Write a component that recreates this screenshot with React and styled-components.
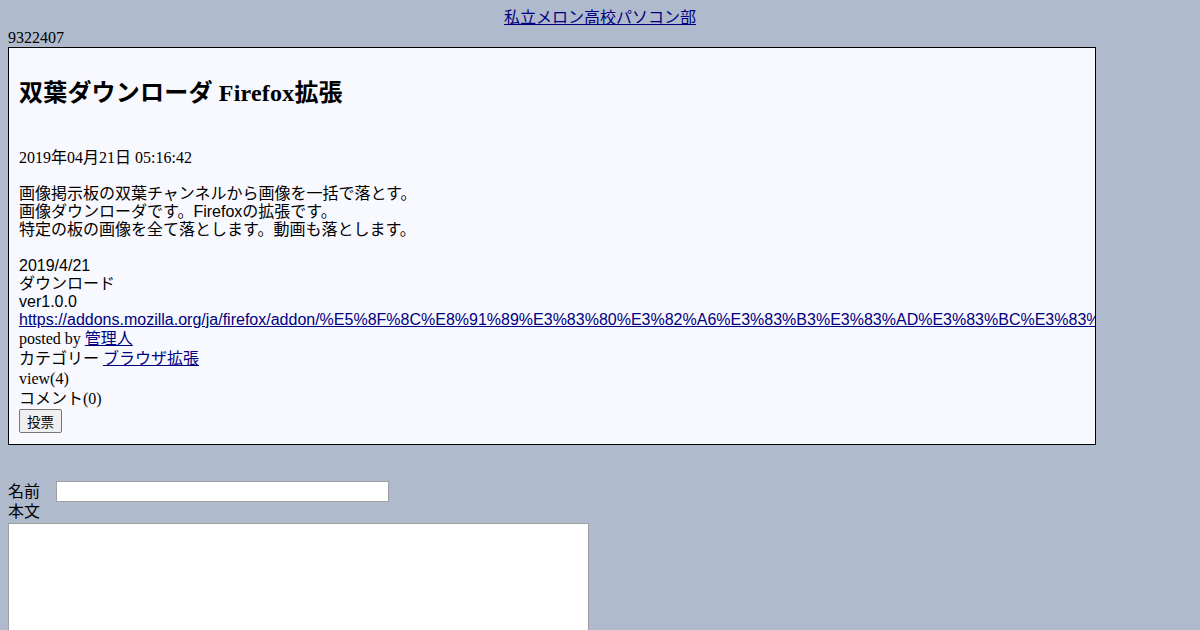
import React from "react";
import styled, { createGlobalStyle } from "styled-components";

const GlobalStyle = createGlobalStyle`
body{
    margin: 8px;
    background: #afbbcd;
    color: #000;
    font-family: 'Liberation Serif', 'Noto Sans CJK JP', serif;
    font-size: 16px;
}
`

const SiteTitle = styled.div`
text-align: center;
line-height: 20px;
`

const NavLink = styled.a`
color: #000080;
text-decoration: underline;
`

const Counter = styled.div`
line-height: 19px;
`

const Article = styled.div`
width: 1066px;
padding: 10px 10px 11px;
border: 1px solid #000;
background: #f8f8ff;
overflow: hidden;
`

const Heading = styled.h2`
margin: 20px 0;
font-size: 24px;
line-height: 30px;
font-weight: bold;
letter-spacing: 0.2px;
`

const PostDate = styled.div`
margin: 40px 0 17px;
line-height: 20px;
`

const Body = styled.div`
font-family: 'Liberation Sans', 'Noto Sans CJK JP', sans-serif;
line-height: 18px;
white-space: nowrap;
`

const MetaLine = styled.div`
line-height: 20px;
`

const VoteButton = styled.button`
height: 24px;
padding: 1px 7px;
font-family: 'Noto Sans CJK JP', sans-serif;
font-size: 13.5px;
background: #efefef;
border: 1px solid #767676;
border-radius: 2px;
color: #000;
`

const CommentForm = styled.form`
margin-top: 36px;
`

const NameRow = styled.div`
display: flex;
align-items: center;
height: 21px;
`

const Label = styled.label`
display: inline-block;
width: 48px;
line-height: 20px;
`

const NameInput = styled.input`
box-sizing: border-box;
width: 333px;
height: 21px;
border: 1px solid #a0a0a0;
background: #fff;
padding: 1px 2px;
`

const BodyLabel = styled.div`
line-height: 20px;
`

const BodyArea = styled.textarea`
display: block;
box-sizing: border-box;
margin-top: 1px;
width: 581px;
height: 160px;
border: 1px solid #a0a0a0;
background: #fff;
resize: none;
`

const url = "https://addons.mozilla.org/ja/firefox/addon/%E5%8F%8C%E8%91%89%E3%83%80%E3%82%A6%E3%83%B3%E3%83%AD%E3%83%BC%E3%83%80/";

const App = () => {
    return (
        <>
            <GlobalStyle />
            <SiteTitle><NavLink href="#">私立メロン高校パソコン部</NavLink></SiteTitle>
            <Counter>9322407</Counter>
            <Article>
                <Heading>双葉ダウンローダ Firefox拡張</Heading>
                <PostDate>2019年04月21日 05:16:42</PostDate>
                <Body>
                    画像掲示板の双葉チャンネルから画像を一括で落とす。<br />
                    画像ダウンローダです。Firefoxの拡張です。<br />
                    特定の板の画像を全て落とします。動画も落とします。<br />
                    <br />
                    2019/4/21<br />
                    ダウンロード<br />
                    ver1.0.0<br />
                    <NavLink href="#">{url}</NavLink>
                </Body>
                <MetaLine>posted by <NavLink href="#">管理人</NavLink></MetaLine>
                <MetaLine>カテゴリー <NavLink href="#">ブラウザ拡張</NavLink></MetaLine>
                <MetaLine>view(4)</MetaLine>
                <MetaLine>コメント(0)</MetaLine>
                <VoteButton type="button">投票</VoteButton>
            </Article>
            <CommentForm onSubmit={(e) => e.preventDefault()}>
                <NameRow>
                    <Label>名前</Label>
                    <NameInput type="text" />
                </NameRow>
                <BodyLabel>本文</BodyLabel>
                <BodyArea />
            </CommentForm>
        </>
    )
}

export default App;
